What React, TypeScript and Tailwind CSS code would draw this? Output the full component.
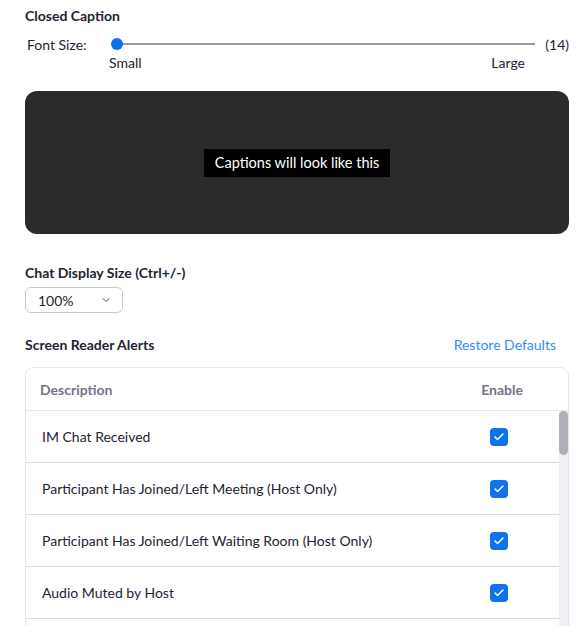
import { Check, ChevronDown } from "lucide-react";

const alerts = [
  "IM Chat Received",
  "Participant Has Joined/Left Meeting (Host Only)",
  "Participant Has Joined/Left Waiting Room (Host Only)",
  "Audio Muted by Host",
];

function Checkbox() {
  return (
    <span className="flex h-[18px] w-[18px] items-center justify-center rounded-[4px] bg-[#0e72ed]">
      <Check className="h-3 w-3 text-white" strokeWidth={3} />
    </span>
  );
}

export default function App() {
  return (
    <div className="h-[626px] w-[586px] overflow-hidden bg-white pl-[25px] pr-[17px] pt-[6px] font-['Segoe_UI','Lato',sans-serif] text-[14px] text-[#232333]">
      <h2 className="text-[14px] font-bold leading-5">Closed Caption</h2>

      <div className="mt-[8px] flex h-[20px] items-center">
        <span className="w-[84px] pl-[2px]">Font Size:</span>
        <div className="relative flex h-[20px] flex-1 items-center">
          <div className="ml-[8px] h-[2px] w-[418px] bg-[#9b99a8]" />
          <span className="absolute left-[2px] top-[4px] h-[12px] w-[12px] rounded-full bg-[#0e72ed]" />
        </div>
        <span>(14)</span>
      </div>
      <div className="flex h-[16px] items-center pl-[84px] pr-[44px]">
        <span>Small</span>
        <span className="ml-auto">Large</span>
      </div>

      <div className="mt-[21px] flex h-[143px] items-center justify-center rounded-[12px] bg-[#2b2b2b]">
        <span className="bg-black px-[11px] py-[5px] text-[14.5px] leading-[18px] text-white">
          Captions will look like this
        </span>
      </div>

      <h3 className="mt-[29px] font-bold leading-5">Chat Display Size (Ctrl+/-)</h3>
      <button className="mt-[4px] flex h-[26px] w-[98px] items-center rounded-[6px] border border-[#c9c7d3] pl-[12px] pr-[10px]">
        <span>100%</span>
        <ChevronDown className="ml-auto h-3 w-3 text-[#555]" strokeWidth={2} />
      </button>

      <div className="mt-[21px] flex h-[20px] items-center pr-[13px]">
        <h3 className="font-bold">Screen Reader Alerts</h3>
        <a className="ml-auto text-[#2d8cff]">Restore Defaults</a>
      </div>

      <div className="mt-[13px] overflow-hidden rounded-t-[8px] border border-[#e8e7ef]">
        <div className="flex h-[43px] items-center border-b border-[#e8e7ef] pl-[14px] pr-[45px] font-bold text-[#747487]">
          <span>Description</span>
          <span className="ml-auto">Enable</span>
        </div>
        <div className="relative">
          {alerts.map((text) => (
            <div
              key={text}
              className="flex h-[52px] items-center border-b border-[#dedde3] pl-[16px] pr-[60px]"
            >
              <span>{text}</span>
              <span className="ml-auto">
                <Checkbox />
              </span>
            </div>
          ))}
          <div className="h-[52px]" />
          <div className="absolute right-0 top-0 h-full w-[9px] bg-[#f1f0f5]">
            <div className="h-[44px] w-full rounded-full bg-[#b0afb6]" />
          </div>
        </div>
      </div>
    </div>
  );
}
